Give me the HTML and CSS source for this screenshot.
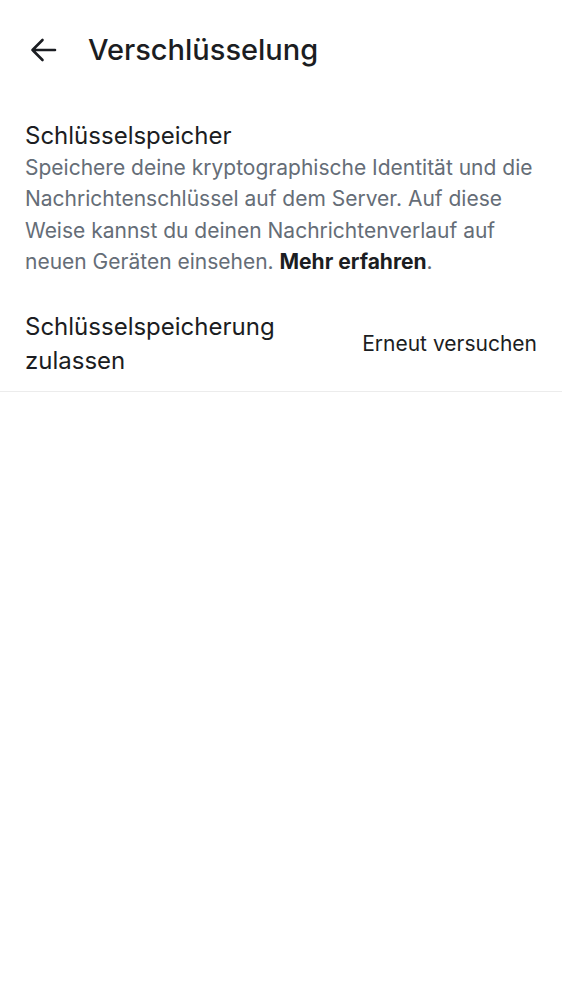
FILE: index.html
```html
<!DOCTYPE html>
<html lang="de">
<head>
<meta charset="utf-8">
<link rel="stylesheet" href="styles.css">
</head>
<body>
<div class="screen">
  <header class="topbar">
    <button class="back" aria-label="Zurück">
      <svg width="28" height="28" viewBox="0 0 28 28"><path d="M26 14H3.5M13.5 4L3.5 14l10 10" fill="none" stroke="#1b1d22" stroke-width="2.6" stroke-linecap="round" stroke-linejoin="round"/></svg>
    </button>
    <h1 class="title">Verschlüsselung</h1>
  </header>
  <section class="info">
    <h2 class="info-title">Schlüsselspeicher</h2>
    <p class="info-text">Speichere deine kryptographische Identität und die Nachrichtenschlüssel auf dem Server. Auf diese Weise kannst du deinen Nachrichtenverlauf auf neuen Geräten einsehen. <strong class="link">Mehr erfahren</strong>.</p>
  </section>
  <div class="row">
    <div class="row-label">Schlüsselspeicherung zulassen</div>
    <div class="row-action">Erneut versuchen</div>
  </div>
</div>
</body>
</html>
```
FILE: styles.css
```css
html, body {
  margin: 0;
  padding: 0;
  background: #ffffff;
}
body {
  font-family: Inter, Roboto, "Noto Sans", sans-serif;
  color: #1b1d22;
}
.screen {
  width: 562px;
}
.topbar {
  display: flex;
  align-items: center;
  height: 99px;
  padding: 0 0 0 29px;
  box-sizing: border-box;
}
.back {
  display: flex;
  align-items: center;
  justify-content: center;
  width: 28px;
  height: 28px;
  padding: 0;
  border: 0;
  background: none;
}
.title {
  margin: 0 0 0 31px;
  font-size: 29px;
  font-weight: 500;
  color: #1b1d22;
}
.info {
  padding: 21px 25px 0 25px;
}
.info-title {
  margin: 0;
  font-size: 24px;
  font-weight: 400;
  line-height: 32px;
  color: #1b1d22;
}
.info-text {
  margin: 0;
  font-size: 21px;
  line-height: 31.4px;
  color: #656d77;
}
.link {
  color: #1b1d22;
  font-weight: 700;
}
.row {
  display: flex;
  align-items: center;
  justify-content: space-between;
  padding: 32px 25px 13px 25px;
  border-bottom: 1px solid #ececec;
}
.row-label {
  width: 300px;
  font-size: 24px;
  line-height: 34px;
  color: #1b1d22;
}
.row-action {
  font-size: 21px;
  color: #1b1d22;
}
```
